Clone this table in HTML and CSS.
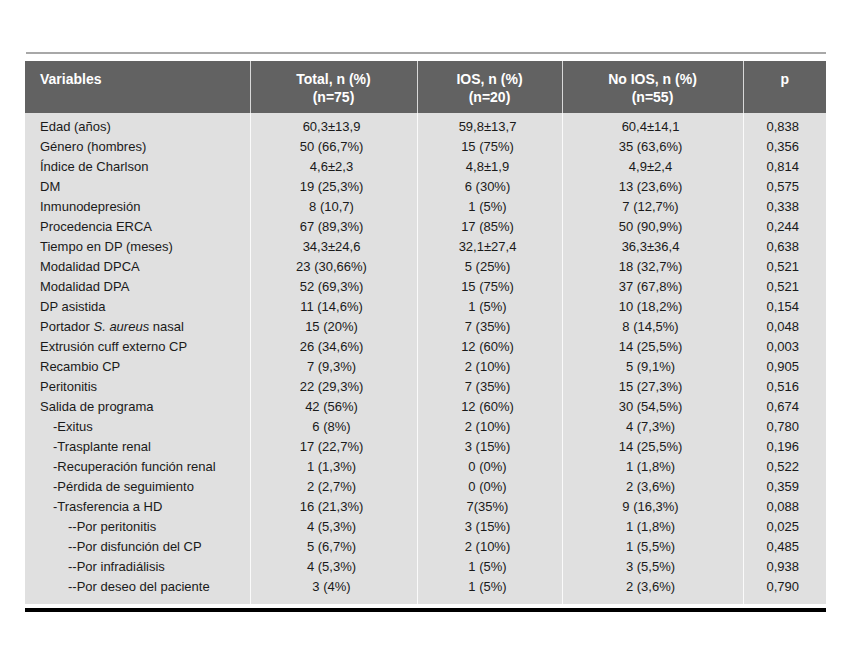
FILE: index.html
```html
<!DOCTYPE html>
<html lang="es">
<head>
    <meta charset="UTF-8">
    <title>Tabla</title>
    <link rel="stylesheet" href="styles.css">
</head>
<body>

    <div class="sheet">
        <!-- Top rule -->
        <div class="top-rule"></div>

        <table class="data-table">
            <colgroup>
                <col class="c-var">
                <col class="c-total">
                <col class="c-ios">
                <col class="c-noios">
                <col class="c-p">
            </colgroup>
            <thead>
                <tr>
                    <th class="left">Variables</th>
                    <th>Total, n (%)<br>(n=75)</th>
                    <th>IOS, n (%)<br>(n=20)</th>
                    <th>No IOS, n (%)<br>(n=55)</th>
                    <th>p</th>
                </tr>
            </thead>
            <tbody>
                <tr class="first"><td class="left">Edad (años)</td><td>60,3±13,9</td><td>59,8±13,7</td><td>60,4±14,1</td><td>0,838</td></tr>
                <tr><td class="left">Género (hombres)</td><td>50 (66,7%)</td><td>15 (75%)</td><td>35 (63,6%)</td><td>0,356</td></tr>
                <tr><td class="left">Índice de Charlson</td><td>4,6±2,3</td><td>4,8±1,9</td><td>4,9±2,4</td><td>0,814</td></tr>
                <tr><td class="left">DM</td><td>19 (25,3%)</td><td>6 (30%)</td><td>13 (23,6%)</td><td>0,575</td></tr>
                <tr><td class="left">Inmunodepresión</td><td>8 (10,7)</td><td>1 (5%)</td><td>7 (12,7%)</td><td>0,338</td></tr>
                <tr><td class="left">Procedencia ERCA</td><td>67 (89,3%)</td><td>17 (85%)</td><td>50 (90,9%)</td><td>0,244</td></tr>
                <tr><td class="left">Tiempo en DP (meses)</td><td>34,3±24,6</td><td>32,1±27,4</td><td>36,3±36,4</td><td>0,638</td></tr>
                <tr><td class="left">Modalidad DPCA</td><td>23 (30,66%)</td><td>5 (25%)</td><td>18 (32,7%)</td><td>0,521</td></tr>
                <tr><td class="left">Modalidad DPA</td><td>52 (69,3%)</td><td>15 (75%)</td><td>37 (67,8%)</td><td>0,521</td></tr>
                <tr><td class="left">DP asistida</td><td>11 (14,6%)</td><td>1 (5%)</td><td>10 (18,2%)</td><td>0,154</td></tr>
                <tr><td class="left">Portador <i>S. aureus</i> nasal</td><td>15 (20%)</td><td>7 (35%)</td><td>8 (14,5%)</td><td>0,048</td></tr>
                <tr><td class="left">Extrusión cuff externo CP</td><td>26 (34,6%)</td><td>12 (60%)</td><td>14 (25,5%)</td><td>0,003</td></tr>
                <tr><td class="left">Recambio CP</td><td>7 (9,3%)</td><td>2 (10%)</td><td>5 (9,1%)</td><td>0,905</td></tr>
                <tr><td class="left">Peritonitis</td><td>22 (29,3%)</td><td>7 (35%)</td><td>15 (27,3%)</td><td>0,516</td></tr>
                <tr><td class="left">Salida de programa</td><td>42 (56%)</td><td>12 (60%)</td><td>30 (54,5%)</td><td>0,674</td></tr>
                <tr><td class="left sub">-Exitus</td><td>6 (8%)</td><td>2 (10%)</td><td>4 (7,3%)</td><td>0,780</td></tr>
                <tr><td class="left sub">-Trasplante renal</td><td>17 (22,7%)</td><td>3 (15%)</td><td>14 (25,5%)</td><td>0,196</td></tr>
                <tr><td class="left sub">-Recuperación función renal</td><td>1 (1,3%)</td><td>0 (0%)</td><td>1 (1,8%)</td><td>0,522</td></tr>
                <tr><td class="left sub">-Pérdida de seguimiento</td><td>2 (2,7%)</td><td>0 (0%)</td><td>2 (3,6%)</td><td>0,359</td></tr>
                <tr><td class="left sub">-Trasferencia a HD</td><td>16 (21,3%)</td><td>7(35%)</td><td>9 (16,3%)</td><td>0,088</td></tr>
                <tr><td class="left subsub">--Por peritonitis</td><td>4 (5,3%)</td><td>3 (15%)</td><td>1 (1,8%)</td><td>0,025</td></tr>
                <tr><td class="left subsub">--Por disfunción del CP</td><td>5 (6,7%)</td><td>2 (10%)</td><td>1 (5,5%)</td><td>0,485</td></tr>
                <tr><td class="left subsub">--Por infradiálisis</td><td>4 (5,3%)</td><td>1 (5%)</td><td>3 (5,5%)</td><td>0,938</td></tr>
                <tr class="last"><td class="left subsub">--Por deseo del paciente</td><td>3 (4%)</td><td>1 (5%)</td><td>2 (3,6%)</td><td>0,790</td></tr>
            </tbody>
        </table>

        <!-- Bottom rule -->
        <div class="bottom-rule"></div>
    </div>

</body>
</html>
```

FILE: styles.css
```css
/* Basic styling */
body {
    font-family: "Liberation Sans", Arial, sans-serif;
    margin: 0;
    padding: 0;
    background-color: white;
    color: #1a1a1a;
}

.sheet {
    width: 801px;
    margin: 0 0 0 25px;
    padding-top: 52px;
}

/* Rules */
.top-rule {
    height: 2px;
    margin-left: 1px;
    background-color: #a8a8a8;
    margin-bottom: 7px;
}

.bottom-rule {
    height: 4px;
    margin-top: 4px;
    background-color: #000;
}

/* Table */
.data-table {
    width: 801px;
    border-collapse: collapse;
    table-layout: fixed;
    font-size: 13px;
}

.c-var { width: 225px; }
.c-total { width: 167px; }
.c-ios { width: 145px; }
.c-noios { width: 181px; }
.c-p { width: 83px; }

/* Header */
.data-table thead th {
    background-color: #626262;
    color: white;
    font-weight: bold;
    font-size: 14px;
    line-height: 18px;
    height: 36px;
    padding: 9px 0 7px 0;
    text-align: center;
    vertical-align: top;
    border-left: 1px solid #d8d8d8;
}

.data-table thead th:first-child {
    border-left: none;
}

/* Body */
.data-table tbody td {
    background-color: #e0e0e0;
    height: 20px;
    padding: 0 4px 0 0;
    line-height: 20px;
    text-align: center;
    white-space: nowrap;
    border-left: 1px solid #fafafa;
}

.data-table tbody td:first-child {
    border-left: none;
}

.data-table .left {
    text-align: left;
    padding-left: 15px;
}

.data-table td.sub {
    padding-left: 28px;
}

.data-table td.subsub {
    padding-left: 43px;
}

.data-table tr.first td {
    padding-top: 4px;
}

.data-table tr.last td {
    padding-bottom: 7px;
}
```
